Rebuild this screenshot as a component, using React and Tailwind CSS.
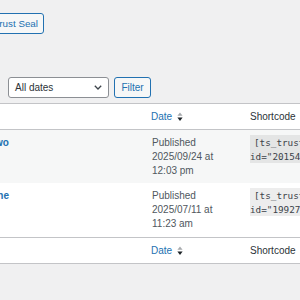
import React from "react";

function SortIcon() {
  return (
    <svg width="6" height="10" viewBox="0 0 6 10" className="ml-[5px] shrink-0">
      <path d="M3 0.5 L5.6 3.8 L0.4 3.8 Z" fill="#a7aaad" />
      <path d="M0.4 5.6 L5.6 5.6 L3 8.9 Z" fill="#1d2327" />
    </svg>
  );
}

function HeaderRow({ top }) {
  return (
    <div
      className={
        "grid grid-cols-[216px_98px_1fr] h-[26px] items-center bg-white border-[#c3c4c7] " +
        (top ? "border-b" : "border-t")
      }
    >
      <div className="pl-[11px] text-[#2271b1]">Title</div>
      <div className="pl-[7px] flex items-center text-[#2271b1]">
        <span>Date</span>
        <SortIcon />
      </div>
      <div className="pl-[8px] text-[#2c3338]">Shortcode</div>
    </div>
  );
}

function Row({ title, date, time, id, striped, h }) {
  return (
    <div
      className={
        "grid grid-cols-[216px_98px_1fr] pt-[6px] leading-[14px] " +
        (striped ? "bg-[#f6f7f7] " : "bg-white ") +
        h
      }
    >
      <div className="pl-[11px] font-bold text-[#2271b1] whitespace-nowrap">{title}</div>
      <div className="pl-[8px] text-[#50575e] whitespace-nowrap">
        <div>Published</div>
        <div>{date} at</div>
        <div>{time}</div>
      </div>
      <div className="pl-[8px] whitespace-nowrap">
        <code className="font-['DejaVu_Sans_Mono',monospace] text-[9.3px] leading-[14px] text-[#3c434a] bg-[rgba(0,0,0,0.07)] pl-[4px] pr-[4px] pt-[2px] pb-[1px]">
          [ts_trust_seal <br />
          id="{id}"]
        </code>
      </div>
    </div>
  );
}

export default function App() {
  return (
    <div className="w-[300px] h-[300px] overflow-hidden bg-[#f0f0f1] font-['Liberation_Sans',Arial,sans-serif] text-[10px]">
      <div className="pt-[13px]">
        <div className="flex w-[44px] justify-end">
          <button className="shrink-0 whitespace-nowrap h-[21px] pl-[7px] pr-[5px] border border-[#2271b1] rounded-[3px] bg-[#f6f7f7] text-[#2271b1] text-[9.8px] leading-[19px]">
            Add New Trust Seal
          </button>
        </div>
      </div>
      <div className="flex items-center gap-[5px] pl-[8px] mt-[43px]">
        <div className="w-[101px] h-[21px] border border-[#8c8f94] rounded-[3px] bg-white flex items-center justify-between pl-[6px] pr-[6px] text-[#2c3338]">
          <span>All dates</span>
          <svg width="8" height="5" viewBox="0 0 8 5">
            <path d="M0.8 0.8 L4 4 L7.2 0.8" fill="none" stroke="#3c434a" strokeWidth="1.3" />
          </svg>
        </div>
        <button className="h-[21px] w-[37px] border border-[#2271b1] rounded-[3px] bg-[#f6f7f7] text-[#2271b1] flex items-center justify-center">
          Filter
        </button>
      </div>
      <div className="ml-[-72px] w-[420px] mt-[5px] border-t border-b border-[#c3c4c7] bg-white">
        <HeaderRow top />
        <Row title="Trust Seal Two" date="2025/09/24" time="12:03 pm" id="20154" striped h="h-[53px]" />
        <Row title="Trust Seal One" date="2025/07/11" time="11:23 am" id="19927" h="h-[54px]" />
        <HeaderRow />
      </div>
    </div>
  );
}
